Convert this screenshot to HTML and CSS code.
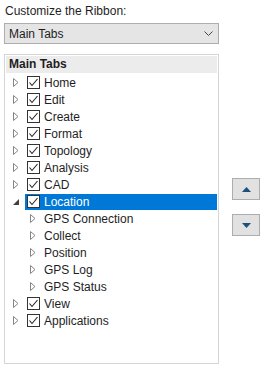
FILE: index.html
```
<!DOCTYPE html>
<html lang="en">
<head>
    <meta charset="UTF-8">
    <title>Customize the Ribbon</title>
    <link rel="stylesheet" href="styles.css">
</head>
<body>

    <div class="caption">Customize the Ribbon:</div>

    <div class="combo">
        <span>Main Tabs</span>
        <svg class="chevron" width="9" height="5" viewBox="0 0 9 5"><path d="M0.5 0.5 L4.5 4.5 L8.5 0.5" fill="none" stroke="#444" stroke-width="1"/></svg>
    </div>

    <div class="panel">
        <div class="tree">
            <div class="tree-head">Main Tabs</div>

            <div class="node"><span class="exp"><svg width="6" height="9" viewBox="0 0 6 9"><path d="M0.5 0.5 L5 4.5 L0.5 8.5 Z" fill="none" stroke="#858585"/></svg></span><div class="item"><span class="check"><svg width="11" height="11" viewBox="0 0 11 11"><path d="M1.5 5.5 L4 8.5 L9.5 2" fill="none" stroke="#222" stroke-width="1.1"/></svg></span>Home</div></div>
            <div class="node"><span class="exp"><svg width="6" height="9" viewBox="0 0 6 9"><path d="M0.5 0.5 L5 4.5 L0.5 8.5 Z" fill="none" stroke="#858585"/></svg></span><div class="item"><span class="check"><svg width="11" height="11" viewBox="0 0 11 11"><path d="M1.5 5.5 L4 8.5 L9.5 2" fill="none" stroke="#222" stroke-width="1.1"/></svg></span>Edit</div></div>
            <div class="node"><span class="exp"><svg width="6" height="9" viewBox="0 0 6 9"><path d="M0.5 0.5 L5 4.5 L0.5 8.5 Z" fill="none" stroke="#858585"/></svg></span><div class="item"><span class="check"><svg width="11" height="11" viewBox="0 0 11 11"><path d="M1.5 5.5 L4 8.5 L9.5 2" fill="none" stroke="#222" stroke-width="1.1"/></svg></span>Create</div></div>
            <div class="node"><span class="exp"><svg width="6" height="9" viewBox="0 0 6 9"><path d="M0.5 0.5 L5 4.5 L0.5 8.5 Z" fill="none" stroke="#858585"/></svg></span><div class="item"><span class="check"><svg width="11" height="11" viewBox="0 0 11 11"><path d="M1.5 5.5 L4 8.5 L9.5 2" fill="none" stroke="#222" stroke-width="1.1"/></svg></span>Format</div></div>
            <div class="node"><span class="exp"><svg width="6" height="9" viewBox="0 0 6 9"><path d="M0.5 0.5 L5 4.5 L0.5 8.5 Z" fill="none" stroke="#858585"/></svg></span><div class="item"><span class="check"><svg width="11" height="11" viewBox="0 0 11 11"><path d="M1.5 5.5 L4 8.5 L9.5 2" fill="none" stroke="#222" stroke-width="1.1"/></svg></span>Topology</div></div>
            <div class="node"><span class="exp"><svg width="6" height="9" viewBox="0 0 6 9"><path d="M0.5 0.5 L5 4.5 L0.5 8.5 Z" fill="none" stroke="#858585"/></svg></span><div class="item"><span class="check"><svg width="11" height="11" viewBox="0 0 11 11"><path d="M1.5 5.5 L4 8.5 L9.5 2" fill="none" stroke="#222" stroke-width="1.1"/></svg></span>Analysis</div></div>
            <div class="node"><span class="exp"><svg width="6" height="9" viewBox="0 0 6 9"><path d="M0.5 0.5 L5 4.5 L0.5 8.5 Z" fill="none" stroke="#858585"/></svg></span><div class="item"><span class="check"><svg width="11" height="11" viewBox="0 0 11 11"><path d="M1.5 5.5 L4 8.5 L9.5 2" fill="none" stroke="#222" stroke-width="1.1"/></svg></span>CAD</div></div>
            <div class="node"><span class="exp"><svg width="6" height="9" viewBox="0 0 6 9"><path d="M0 8 L6 8 L6 2 Z" fill="#404040"/></svg></span><div class="item selected"><span class="check"><svg width="11" height="11" viewBox="0 0 11 11"><path d="M1.5 5.5 L4 8.5 L9.5 2" fill="none" stroke="#222" stroke-width="1.1"/></svg></span>Location</div></div>

            <div class="node child"><span class="exp"><svg width="6" height="9" viewBox="0 0 6 9"><path d="M0.5 0.5 L5 4.5 L0.5 8.5 Z" fill="none" stroke="#858585"/></svg></span><div class="item">GPS Connection</div></div>
            <div class="node child"><span class="exp"><svg width="6" height="9" viewBox="0 0 6 9"><path d="M0.5 0.5 L5 4.5 L0.5 8.5 Z" fill="none" stroke="#858585"/></svg></span><div class="item">Collect</div></div>
            <div class="node child"><span class="exp"><svg width="6" height="9" viewBox="0 0 6 9"><path d="M0.5 0.5 L5 4.5 L0.5 8.5 Z" fill="none" stroke="#858585"/></svg></span><div class="item">Position</div></div>
            <div class="node child"><span class="exp"><svg width="6" height="9" viewBox="0 0 6 9"><path d="M0.5 0.5 L5 4.5 L0.5 8.5 Z" fill="none" stroke="#858585"/></svg></span><div class="item">GPS Log</div></div>
            <div class="node child"><span class="exp"><svg width="6" height="9" viewBox="0 0 6 9"><path d="M0.5 0.5 L5 4.5 L0.5 8.5 Z" fill="none" stroke="#858585"/></svg></span><div class="item">GPS Status</div></div>

            <div class="node"><span class="exp"><svg width="6" height="9" viewBox="0 0 6 9"><path d="M0.5 0.5 L5 4.5 L0.5 8.5 Z" fill="none" stroke="#858585"/></svg></span><div class="item"><span class="check"><svg width="11" height="11" viewBox="0 0 11 11"><path d="M1.5 5.5 L4 8.5 L9.5 2" fill="none" stroke="#222" stroke-width="1.1"/></svg></span>View</div></div>
            <div class="node"><span class="exp"><svg width="6" height="9" viewBox="0 0 6 9"><path d="M0.5 0.5 L5 4.5 L0.5 8.5 Z" fill="none" stroke="#858585"/></svg></span><div class="item"><span class="check"><svg width="11" height="11" viewBox="0 0 11 11"><path d="M1.5 5.5 L4 8.5 L9.5 2" fill="none" stroke="#222" stroke-width="1.1"/></svg></span>Applications</div></div>
        </div>

        <div class="movers">
            <button class="move-btn"><svg width="9" height="5" viewBox="0 0 9 5"><path d="M0 5 L4.5 0 L9 5 Z" fill="#1d4f7c"/></svg></button>
            <button class="move-btn"><svg width="9" height="5" viewBox="0 0 9 5"><path d="M0 0 L9 0 L4.5 5 Z" fill="#1d4f7c"/></svg></button>
        </div>
    </div>

</body>
</html>
```

FILE: styles.css
```
:root {
    --text: #1e1e1e;
    --select-blue: #0078d7;
    --box-border: #d5d5d5;
    --btn-face: #e1e1e1;
    --btn-border: #adadad;
}

body {
    margin: 0;
    width: 262px;
    height: 366px;
    overflow: hidden;
    background: #ffffff;
    font-family: "Liberation Sans", Arial, sans-serif;
    font-size: 12px;
    color: var(--text);
}
.caption {
    padding: 4px 0 0 5px;
    height: 19px;
    line-height: 15px;
}
.combo {
    margin-left: 4px;
    width: 215px;
    height: 21px;
    box-sizing: border-box;
    border: 1px solid var(--btn-border);
    background: #e5e5e5;
    display: flex;
    align-items: center;
    justify-content: space-between;
    padding: 0 5px 0 4px;
}
.chevron {
    display: block;
}
.panel {
    display: flex;
    margin-top: 10px;
}
.tree {
    margin-left: 4px;
    width: 215px;
    height: 310px;
    box-sizing: border-box;
    border: 1px solid var(--box-border);
    padding: 1px;
}
.tree-head {
    background: #ececec;
    font-weight: bold;
    height: 17px;
    line-height: 17px;
    padding-left: 3px;
    margin-bottom: 1px;
}
.node {
    display: flex;
    align-items: center;
    height: 17px;
    padding-left: 5px;
}
.node.child {
    padding-left: 22px;
}
.exp {
    width: 14px;
    height: 17px;
    display: flex;
    align-items: center;
    padding-left: 2px;
    box-sizing: border-box;
}
.exp svg {
    display: block;
}
.item {
    flex: 1;
    height: 16px;
    display: flex;
    align-items: center;
    padding-left: 2px;
}
.item.selected {
    background: var(--select-blue);
    color: #ffffff;
}
.check {
    width: 13px;
    height: 13px;
    box-sizing: border-box;
    border: 1px solid #333333;
    background: #ffffff;
    margin-right: 4px;
    display: flex;
    align-items: center;
    justify-content: center;
}
.check svg {
    display: block;
}
.movers {
    display: flex;
    flex-direction: column;
    gap: 14px;
    margin: 124px 0 0 13px;
}
.move-btn {
    width: 28px;
    height: 22px;
    padding: 0;
    border: 1px solid var(--btn-border);
    background: var(--btn-face);
    display: flex;
    align-items: center;
    justify-content: center;
}
```
